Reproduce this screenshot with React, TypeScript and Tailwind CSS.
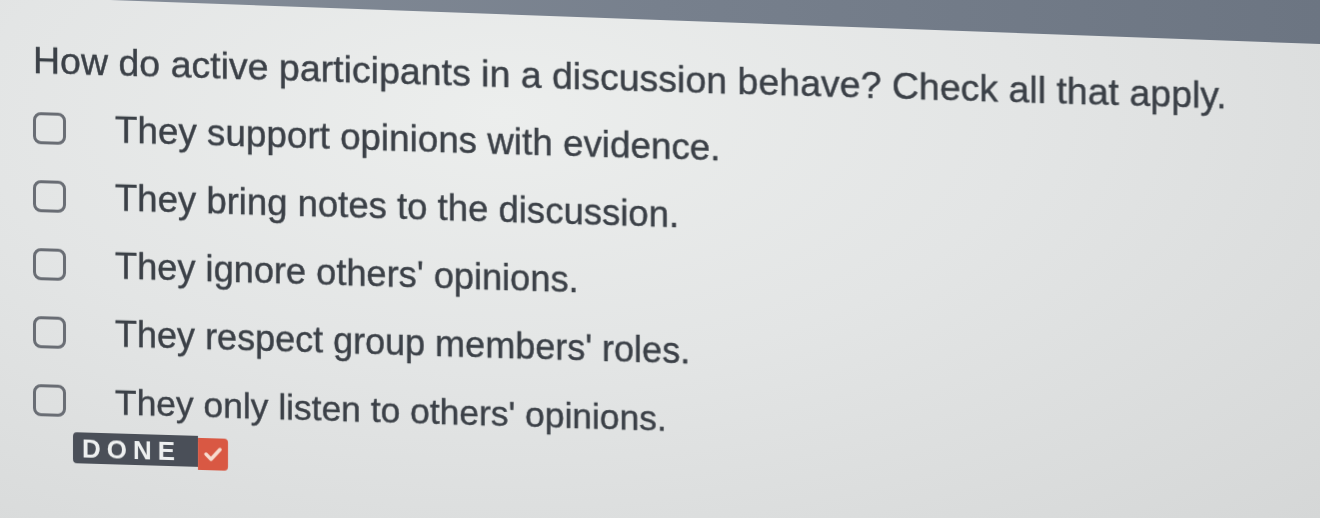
import React from "react";

const options = [
  { t: "They support opinions with evidence.", c: "text-[36.8px]" },
  { t: "They bring notes to the discussion.", c: "text-[36.5px]" },
  { t: "They ignore others' opinions.", c: "text-[36.2px]" },
  { t: "They respect group members' roles.", c: "text-[36px]" },
  { t: "They only listen to others' opinions.", c: "text-[35.4px]" },
];

export default function App() {
  return (
    <div
      className="relative h-[518px] w-full overflow-hidden bg-[radial-gradient(ellipse_at_38%_22%,#eceeed_0%,#e3e5e5_45%,#d5d7d7_100%)]"
      style={{ fontFamily: '"Liberation Sans", Arial, sans-serif' }}
    >
      <div className="absolute left-0 top-0 h-[46px] w-full bg-[linear-gradient(90deg,#868e99,#77808d_50%,#6c7582)] [clip-path:polygon(110px_0,100%_0,100%_44px)]" />
      <div className="relative origin-top-left skew-y-[1.7deg] pl-[33px] pt-[39px] text-[#3b4047] blur-[0.5px] [-webkit-text-stroke:0.4px_#3b4047]">
        <p className="text-[37.5px] leading-[40px] whitespace-nowrap">
          How do active participants in a discussion behave? Check all that apply.
        </p>
        <div className="mt-[28px] flex flex-col gap-[28px]">
          {options.map((o) => (
            <div key={o.t} className="flex h-[40px] items-center">
              <div className="h-[32px] w-[33px] shrink-0 rounded-[8px] border-[3px] border-[#696d74]" />
              <span className={`ml-[49px] ${o.c} leading-[40px] whitespace-nowrap`}>{o.t}</span>
            </div>
          ))}
        </div>
        <div className="ml-[40px] mt-[11px] flex items-start [-webkit-text-stroke:0px]">
          <div className="flex h-[31px] w-[125px] items-center rounded-l-[4px] bg-[#4a4f58] pl-[9px] text-[26px] font-bold leading-none tracking-[6px] text-[#eef0f0]">
            DONE
          </div>
          <div className="mt-[2px] flex h-[32px] w-[30px] items-center justify-center rounded-r-[4px] bg-[#d95843]">
            <svg width="20" height="16" viewBox="0 0 20 16">
              <polyline points="3,8 8,13 17,3" fill="none" stroke="#f7dccf" strokeWidth="3.5" strokeLinecap="round" strokeLinejoin="round" />
            </svg>
          </div>
        </div>
      </div>
    </div>
  );
}
